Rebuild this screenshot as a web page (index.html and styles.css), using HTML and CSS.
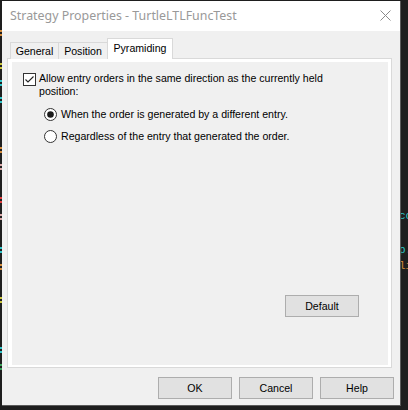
FILE: index.html
```html
<!DOCTYPE html>
<html lang="en">
<head>
    <meta charset="UTF-8">
    <meta name="viewport" content="width=device-width, initial-scale=1.0">
    <title>Strategy Properties - TurtleLTLFuncTest</title>
    <link rel="stylesheet" href="styles.css">
</head>
<body>

<!-- code editor behind the dialog, only its edges show -->
<div class="editor">
    <div class="ln"></div>
    <div class="ln"><span class="lt orange"></span></div>
    <div class="ln"></div>
    <div class="ln"><span class="lt yellow"></span></div>
    <div class="ln"><span class="lt cyan"></span></div>
    <div class="ln"><span class="lt cyan"></span></div>
    <div class="ln"></div>
    <div class="ln"></div>
    <div class="ln"><span class="lt orange"></span></div>
    <div class="ln"><span class="lt pink"></span></div>
    <div class="ln"></div>
    <div class="ln"><span class="lt red"></span></div>
    <div class="ln"><span class="lt pink"></span><span class="rt cyan">co</span></div>
    <div class="ln"></div>
    <div class="ln"><span class="lt cyan"></span><span class="rt cyan">p.</span></div>
    <div class="ln"><span class="lt orange"></span><span class="rt orange">li</span></div>
    <div class="ln"></div>
    <div class="ln"><span class="lt yellow"></span></div>
    <div class="ln"></div>
    <div class="ln"></div>
    <div class="ln"><span class="lt cyan"></span></div>
    <div class="ln"><span class="lt green"></span></div>
</div>

<div class="dialog">
    <div class="titlebar">
        <span class="title">Strategy Properties - TurtleLTLFuncTest</span>
        <svg class="close" width="11" height="11" viewBox="0 0 11 11">
            <line x1="0.5" y1="0.5" x2="10.5" y2="10.5"/>
            <line x1="10.5" y1="0.5" x2="0.5" y2="10.5"/>
        </svg>
    </div>

    <div class="content">
        <div class="tabs">
            <div class="tab">General</div>
            <div class="tab">Position</div>
            <div class="tab active">Pyramiding</div>
        </div>

        <div class="panel">
            <div class="page">
                <label class="check-row">
                    <svg class="checkbox" width="13" height="13" viewBox="0 0 13 13">
                        <rect x="0.5" y="0.5" width="12" height="12" fill="#fff" stroke="#333"/>
                        <polyline points="2.5,6.5 5,9 10.5,3.5" fill="none" stroke="#222" stroke-width="1.1"/>
                    </svg>
                    <span class="check-text">Allow entry orders in the same direction as the currently held position:</span>
                </label>

                <div class="radios">
                    <label class="radio-row">
                        <svg class="radio" width="13" height="13" viewBox="0 0 13 13">
                            <circle cx="6.5" cy="6.5" r="6" fill="#fff" stroke="#333"/>
                            <circle cx="6.5" cy="6.5" r="3.3" fill="#1a1a1a"/>
                        </svg>
                        When the order is generated by a different entry.
                    </label>
                    <label class="radio-row">
                        <svg class="radio" width="13" height="13" viewBox="0 0 13 13">
                            <circle cx="6.5" cy="6.5" r="6" fill="#fff" stroke="#333"/>
                        </svg>
                        Regardless of the entry that generated the order.
                    </label>
                </div>

                <div class="page-actions">
                    <button class="btn">Default</button>
                </div>
            </div>
        </div>

        <div class="actions">
            <button class="btn">OK</button>
            <button class="btn">Cancel</button>
            <button class="btn">Help</button>
        </div>
    </div>
</div>

</body>
</html>
```

FILE: styles.css
```css
body {
    margin: 0;
    background-color: #1e1e1e;
    overflow: hidden;
    font-family: "Liberation Sans", Arial, sans-serif;
}

/* editor behind */
.editor {
    padding-top: 8px;
    font-family: "Liberation Mono", monospace;
    font-size: 11px;
}
.ln {
    display: flex;
    align-items: center;
    height: 16.7px;
    line-height: 16.7px;
    white-space: pre;
}
.lt {
    width: 2px;
    height: 2px;
    flex: none;
    background: currentColor;
    box-shadow: 0 4px 0 currentColor;
    margin-top: -4px;
}
.rt {
    margin-left: 397px;
}
.ln .rt:first-child {
    margin-left: 399px;
}
.orange { color: #d28a3a; }
.yellow { color: #c8c43a; }
.cyan { color: #2cc4c8; }
.pink { color: #d8a6a6; }
.red { color: #e03c3c; }
.green { color: #3aa05a; }

/* dialog */
.dialog {
    position: absolute;
    left: 2px;
    top: 1px;
    width: 399px;
    height: 405px;
    box-sizing: border-box;
    border-right: 1px solid #5a5a5a;
    border-bottom: 1px solid #5a5a5a;
    background: #f0f0f0;
    display: flex;
    flex-direction: column;
    font-size: 10.6px;
    color: #000;
}
.titlebar {
    height: 30px;
    flex: none;
    background: #fff;
    display: flex;
    justify-content: space-between;
    align-items: flex-start;
    padding: 0 9px 0 8px;
}
.title {
    font-family: "Noto Sans", sans-serif;
    font-size: 12.4px;
    color: #999;
    line-height: 16px;
    margin-top: 7px;
}
.close {
    margin-top: 9px;
    stroke: #8a8a8a;
    stroke-width: 1;
}

.content {
    flex: 1;
    display: flex;
    flex-direction: column;
    padding: 7px 8px 6px 5px;
}

/* tabs */
.tabs {
    display: flex;
    height: 21px;
    margin: 0 0 -1px 3px;
    position: relative;
    z-index: 1;
}
.tab {
    box-sizing: border-box;
    height: 17px;
    margin-top: 4px;
    padding-top: 2px;
    border: 1px solid #d9d9d9;
    border-bottom: none;
    line-height: 13px;
    text-align: center;
    background: #f0f0f0;
}
.tab:nth-child(1) { width: 49px; }
.tab:nth-child(2) { width: 50px; margin-left: -1px; }
.tab.active {
    width: 66px;
    height: 21px;
    margin-top: 0;
    margin-left: -1px;
    padding-top: 3px;
    background: #fff;
}

.panel {
    flex: 1;
    border: 1px solid #d9d9d9;
    background: #fff;
    padding: 3px 3px 2px 4px;
    display: flex;
}
.page {
    flex: 1;
    background: #f0f0f0;
    padding: 10px 0 0 11px;
    display: flex;
    flex-direction: column;
    line-height: 13px;
}

.check-row {
    display: flex;
    align-items: flex-start;
    gap: 3px;
}
.checkbox {
    flex: none;
    margin-top: 1px;
}
.check-text {
    max-width: 292px;
}

.radios {
    margin: 10px 0 0 21px;
    display: flex;
    flex-direction: column;
    gap: 9px;
}
.radio-row {
    display: flex;
    align-items: flex-start;
    gap: 4px;
}
.radio {
    flex: none;
}

.page-actions {
    display: flex;
    justify-content: flex-end;
    margin-top: 152px;
    padding-right: 29px;
}

.btn {
    width: 74px;
    height: 22px;
    padding: 0;
    background: #e1e1e1;
    border: 1px solid #adadad;
    border-radius: 0;
    font-family: "Liberation Sans", Arial, sans-serif;
    font-size: 10.6px;
    line-height: 13px;
    color: #000;
}

.actions {
    display: flex;
    justify-content: flex-end;
    gap: 7px;
    margin: 9px -2px 0 0;
}
```
